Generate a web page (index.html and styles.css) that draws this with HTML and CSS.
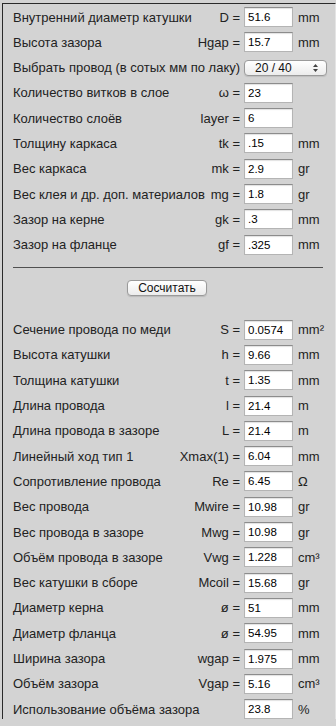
FILE: index.html
```html
<!DOCTYPE html>
<html>
<head>
    <title>Расчёт катушки</title>
    <link rel="stylesheet" href="styles.css">
</head>
<body>
<div class="panel">
    <div class="grid">
        <div class="label"><span>Внутренний диаметр катушки</span><span>D =</span></div><input class="val" type="text" value="51.6"><span class="unit">mm</span>
        <div class="label"><span>Высота зазора</span><span>Hgap =</span></div><input class="val" type="text" value="15.7"><span class="unit">mm</span>
        <div class="label"><span>Выбрать провод (в сотых мм по лаку)</span></div>
        <div class="select">
            <span>20 / 40</span>
            <svg class="arrows" width="7" height="10" viewBox="0 0 7 10"><path d="M3.5 1 L6 4 H1 Z M3.5 9 L6 6 H1 Z" fill="#444"/></svg>
        </div>
        <div class="label"><span>Количество витков в слое</span><span>ω =</span></div><input class="val" type="text" value="23"><span class="unit"></span>
        <div class="label"><span>Количество слоёв</span><span>layer =</span></div><input class="val" type="text" value="6"><span class="unit"></span>
        <div class="label"><span>Толщину каркаса</span><span>tk =</span></div><input class="val" type="text" value=".15"><span class="unit">mm</span>
        <div class="label"><span>Вес каркаса</span><span>mk =</span></div><input class="val" type="text" value="2.9"><span class="unit">gr</span>
        <div class="label"><span>Вес клея и др. доп. материалов</span><span>mg =</span></div><input class="val" type="text" value="1.8"><span class="unit">gr</span>
        <div class="label"><span>Зазор на керне</span><span>gk =</span></div><input class="val" type="text" value=".3"><span class="unit">mm</span>
        <div class="label"><span>Зазор на фланце</span><span>gf =</span></div><input class="val" type="text" value=".325"><span class="unit">mm</span>
    </div>

    <hr class="line">

    <div class="action">
        <button type="button" class="calc">Сосчитать</button>
    </div>

    <div class="grid results">
        <div class="label"><span>Сечение провода по меди</span><span>S =</span></div><input class="val" type="text" value="0.0574"><span class="unit">mm²</span>
        <div class="label"><span>Высота катушки</span><span>h =</span></div><input class="val" type="text" value="9.66"><span class="unit">mm</span>
        <div class="label"><span>Толщина катушки</span><span>t =</span></div><input class="val" type="text" value="1.35"><span class="unit">mm</span>
        <div class="label"><span>Длина провода</span><span>l =</span></div><input class="val" type="text" value="21.4"><span class="unit">m</span>
        <div class="label"><span>Длина провода в зазоре</span><span>L =</span></div><input class="val" type="text" value="21.4"><span class="unit">m</span>
        <div class="label"><span>Линейный ход тип 1</span><span>Xmax(1) =</span></div><input class="val" type="text" value="6.04"><span class="unit">mm</span>
        <div class="label"><span>Сопротивление провода</span><span>Re =</span></div><input class="val" type="text" value="6.45"><span class="unit">Ω</span>
        <div class="label"><span>Вес провода</span><span>Mwire =</span></div><input class="val" type="text" value="10.98"><span class="unit">gr</span>
        <div class="label"><span>Вес провода в зазоре</span><span>Mwg =</span></div><input class="val" type="text" value="10.98"><span class="unit">gr</span>
        <div class="label"><span>Объём провода в зазоре</span><span>Vwg =</span></div><input class="val" type="text" value="1.228"><span class="unit">cm³</span>
        <div class="label"><span>Вес катушки в сборе</span><span>Mcoil =</span></div><input class="val" type="text" value="15.68"><span class="unit">gr</span>
        <div class="label"><span>Диаметр керна</span><span>ø =</span></div><input class="val" type="text" value="51"><span class="unit">mm</span>
        <div class="label"><span>Диаметр фланца</span><span>ø =</span></div><input class="val" type="text" value="54.95"><span class="unit">mm</span>
        <div class="label"><span>Ширина зазора</span><span>wgap =</span></div><input class="val" type="text" value="1.975"><span class="unit">mm</span>
        <div class="label"><span>Объём зазора</span><span>Vgap =</span></div><input class="val" type="text" value="5.16"><span class="unit">cm³</span>
        <div class="label"><span>Использование объёма зазора</span></div><input class="val" type="text" value="23.8"><span class="unit">%</span>
    </div>
</div>
</body>
</html>
```

FILE: styles.css
```css
html, body {
    margin: 0;
    padding: 0;
    background-color: #d3d3d3;
    color: #222222;
    font-family: "Liberation Sans", Arial, sans-serif;
    font-size: 13px;
}

.panel {
    margin: 3px 0 0 2px;
    padding: 3px 12px 0 10px;
    width: 310px;
    border-top: 1px solid #2a2a2a;
    border-left: 1px solid #2a2a2a;
    border-right: 1px solid #e4e4e4;
}

.grid {
    display: grid;
    grid-template-columns: minmax(0, 1fr) 49px 26px;
    grid-auto-rows: 20px;
    column-gap: 4px;
    row-gap: 5.3px;
    align-items: center;
}

.label {
    display: flex;
    justify-content: space-between;
    gap: 4px;
    white-space: nowrap;
}

.unit {
    white-space: nowrap;
    padding-left: 1px;
}

.val {
    box-sizing: border-box;
    width: 49px;
    height: 20px;
    margin: 0;
    padding: 0 0 0 3px;
    background-color: #ffffff;
    color: #000000;
    font-family: "Liberation Sans", Arial, sans-serif;
    font-size: 11.5px;
    border: 1px solid #b4b4b4;
    border-top-color: #8c8c8c;
    border-radius: 0;
    box-shadow: inset 0 1px 1px rgba(0, 0, 0, 0.12);
    outline: none;
}

.select {
    grid-column: 2 / 4;
    box-sizing: border-box;
    height: 16px;
    margin-right: -4px;
    display: flex;
    align-items: center;
    justify-content: space-between;
    padding: 0 7px 0 10px;
    font-size: 12px;
    color: #111111;
    background: linear-gradient(#ffffff, #ececec);
    border: 1px solid #9a9a9a;
    border-radius: 4px;
    box-shadow: 0 1px 1px rgba(0, 0, 0, 0.1);
}

.arrows {
    display: block;
}

.line {
    margin: 12px 0 0 0;
    height: 1px;
    border: none;
    background-color: #505050;
}

.action {
    display: flex;
    justify-content: center;
    margin-top: 12px;
}

.calc {
    box-sizing: border-box;
    width: 80px;
    height: 16px;
    margin-left: -2px;
    padding: 0;
    font-family: "Liberation Sans", Arial, sans-serif;
    font-size: 12px;
    color: #111111;
    background: linear-gradient(#ffffff, #ececec);
    border: 1px solid #9a9a9a;
    border-radius: 4px;
    box-shadow: 0 1px 1px rgba(0, 0, 0, 0.12);
    cursor: pointer;
}

.results {
    margin-top: 24px;
}
```
